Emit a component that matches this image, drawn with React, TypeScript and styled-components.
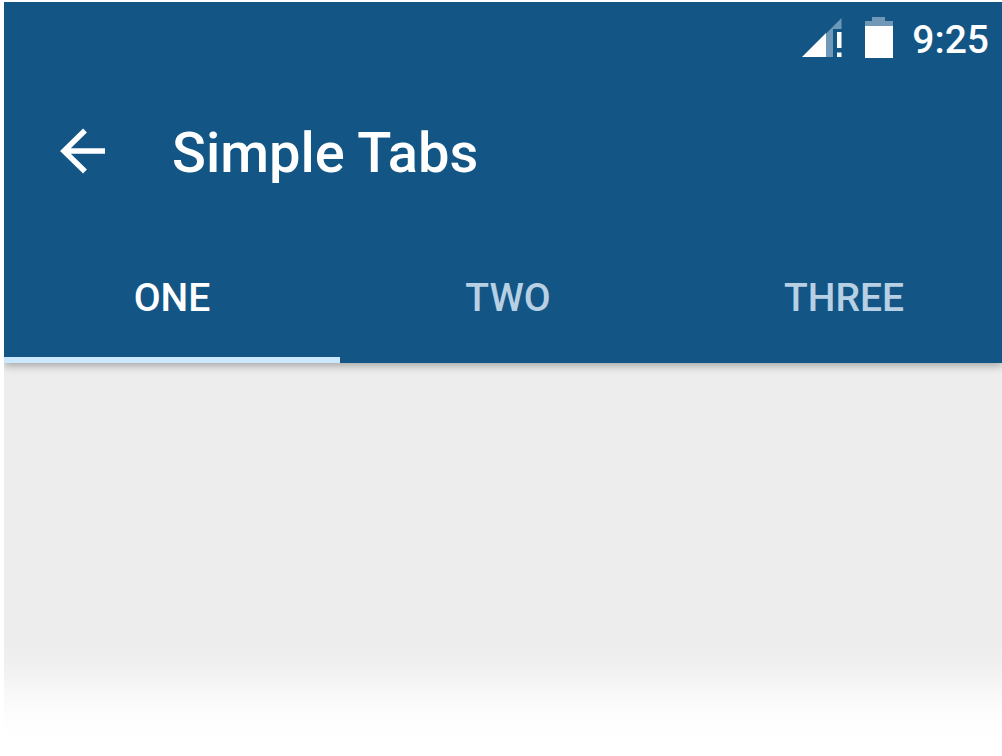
import React, { useState } from "react";
import styled, { createGlobalStyle } from "styled-components";

const GlobalStyle = createGlobalStyle`
  *, *::before, *::after { box-sizing: border-box; }
  body { margin: 0; background: #fff; font-family: Roboto, sans-serif; }
`;

const Screen = styled.div`
  display: flex;
  flex-direction: column;
  min-height: 100vh;
  padding: 2px 0 16px 4px;
  overflow: hidden;
`;

const AppBar = styled.header`
  position: relative;
  background: #135686;
  color: #fff;
  box-shadow: 0 3px 8px rgba(0, 0, 0, 0.3);
  clip-path: inset(0 0 -16px 0);
`;

const StatusBar = styled.div`
  display: flex;
  align-items: center;
  justify-content: flex-end;
  height: 72px;
  padding-right: 13px;
`;

const SignalIcon = styled.svg`
  width: 40px;
  height: 40px;
  margin-right: 23px;
`;

const BatteryIcon = styled.svg`
  width: 28px;
  height: 42px;
  margin-right: 19px;
`;

const Clock = styled.time`
  padding-top: 4px;
  font-size: 39px;
  font-weight: 500;
  line-height: 48px;
`;

const Toolbar = styled.div`
  display: flex;
  align-items: center;
  height: 154px;
  padding-left: 54px;
`;

const BackButton = styled.button`
  display: flex;
  margin: 0 66px 0 0;
  padding: 0;
  border: 0;
  background: none;
  color: inherit;
  cursor: pointer;
`;

const Title = styled.h1`
  margin: 0;
  padding-top: 4px;
  font-size: 56px;
  font-weight: 500;
  line-height: 64px;
`;

const TabList = styled.div`
  display: grid;
  grid-template-columns: repeat(3, 1fr);
  margin-right: -10px;
`;

const Tab = styled.button<{ $active: boolean }>`
  height: 135px;
  padding: 10px 0 0;
  border: 0;
  border-bottom: 6px solid ${(p) => (p.$active ? "#cce8fc" : "transparent")};
  background: none;
  color: ${(p) => (p.$active ? "#fff" : "#b8d0e4")};
  font-family: inherit;
  font-size: 39px;
  font-weight: 500;
  line-height: 48px;
  cursor: pointer;
`;

const Content = styled.main`
  flex: 1;
  background: linear-gradient(
    to bottom,
    #ededed 0,
    #ededed calc(100% - 98px),
    #f0f0f0 calc(100% - 74px),
    #f9f9f9 calc(100% - 44px),
    #fdfdfd calc(100% - 24px),
    #fff 100%
  );
`;

const tabs = ["ONE", "TWO", "THREE"];

export default function App() {
  const [active, setActive] = useState(0);

  return (
    <Screen>
      <GlobalStyle />
      <AppBar>
        <StatusBar>
          <SignalIcon viewBox="0 0 40 40" aria-hidden="true">
            <path d="M24 15.500L39.500 0V11H31V39H24Z" fill="#6d98b7" />
            <path d="M0 39L24 15V39Z" fill="#fff" />
            <path d="M35 14H39.500V30H35ZM35 34.500H39.500V39H35Z" fill="#fff" />
          </SignalIcon>
          <BatteryIcon viewBox="0 0 28 42" aria-hidden="true">
            <path d="M0 10V4H7V0H20V4H28V10Z" fill="#7199b7" />
            <path d="M0 9H28V41H0Z" fill="#fff" />
          </BatteryIcon>
          <Clock>9:25</Clock>
        </StatusBar>
        <Toolbar>
          <BackButton type="button" aria-label="Back">
            <svg width="48" height="48" viewBox="0 0 48 48" fill="none" stroke="#fff" strokeWidth="5.500" aria-hidden="true">
              <path d="M47 24H7M27 3.500L6 24L27 44.500" />
            </svg>
          </BackButton>
          <Title>Simple Tabs</Title>
        </Toolbar>
        <TabList role="tablist">
          {tabs.map((label, i) => (
            <Tab
              key={label}
              id={`tab-${i}`}
              type="button"
              role="tab"
              aria-selected={i === active}
              aria-controls="tab-content"
              $active={i === active}
              onClick={() => setActive(i)}
            >
              {label}
            </Tab>
          ))}
        </TabList>
      </AppBar>
      <Content id="tab-content" role="tabpanel" aria-labelledby={`tab-${active}`} />
    </Screen>
  );
}
